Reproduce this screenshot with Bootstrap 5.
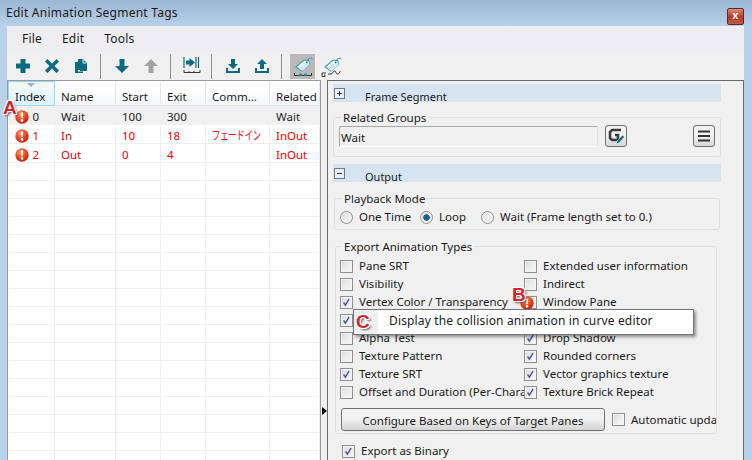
<!DOCTYPE html>
<html lang="en">
  <head>
    <meta charset="UTF-8" />
    <meta name="viewport" content="width=device-width, initial-scale=1.0" />
    <title>Edit Animation Segment Tags</title>
    <link
      rel="stylesheet"
      href="https://cdn.jsdelivr.net/npm/bootstrap@5.3.0/dist/css/bootstrap.min.css"
    />
    <style>
      html, body { height: 460px; overflow: hidden; }
      body {
        font-family: "Noto Sans", "Noto Sans CJK JP", sans-serif;
        font-size: 11.5px;
        line-height: 16px;
        color: #1a1a1a;
        background: #b9d1ea;
      }
      .app-win { height: 460px; position: relative; overflow: hidden; }
      .title-bar {
        height: 27px;
        padding: 5px 8px 0 6px;
        background: linear-gradient(#9bb6d3, #b9d1ea);
        font-size: 12px;
        letter-spacing: .25px;
      }
      .close-x {
        width: 17px; height: 17px; margin-top: 3px;
        border: 1px solid #5c2a25; border-radius: 2px;
        background: linear-gradient(#d98a78, #b23c2c 55%, #c05c48);
        color: #fff; font: bold 11px/13px "Liberation Sans", sans-serif;
        text-align: center;
      }
      .client { margin: 0 8px 0 7px; flex: 1 1 auto; min-height: 0; background: #f0f0f0; }
      .menu-strip { height: 26px; background: #eeeef2; padding-left: 15px; gap: 20px; align-items: center; font-size: 12px; }
      .menu-strip span { letter-spacing: .2px; }
      .tool-strip { height: 29px; padding: 2px 0 0 3px; gap: 4px; }
      .tool-btn { width: 25px; height: 25px; display: flex; align-items: center; justify-content: center; }
      .tool-btn.on { background: #b9b9b9; }
      .tool-sep { width: 1px; height: 25px; margin: 0 4px 0 3px; background: #8c8c8c; }
      .panes { flex: 1 1 auto; min-height: 0; }
      .left-pane { width: 314px; border: 1px solid #9a9a9a; border-bottom: 0; background: #fff; overflow: hidden; flex: none; }
      .split-bar { width: 6px; flex: none; position: relative; }
      .split-bar::after {
        content: ""; position: absolute; left: 1px; top: 327px;
        border-left: 5px solid #000; border-top: 4px solid transparent; border-bottom: 4px solid transparent;
      }
      .right-pane { flex: 1 1 auto; border: 1px solid #696969; border-bottom: 0; padding: 3px 0 0 5px; overflow: hidden; min-width: 0; }

      .seg-table { table-layout: fixed; width: 311px; margin: 0; border-collapse: collapse; }
      .seg-table > thead > tr > th {
        height: 24px; padding: 3px 0 0 6px; font-weight: 400; color: #1a1a1a; white-space: nowrap; overflow: hidden;
        background: linear-gradient(#fff 40%, #f1f5f9);
        border: 0; border-right: 1px solid #e4e8ec; border-bottom: 1px solid #e4e8ec;
        position: relative;
      }
      .seg-table > thead > tr > th.sorted { background: linear-gradient(#f4fbfe, #ddf1fb); border: 1px solid #96d9f9; padding-left: 6px; }
      .sort-mark {
        position: absolute; left: 18px; top: 1px;
        border-top: 4px solid #8fb6d0; border-left: 4px solid transparent; border-right: 4px solid transparent;
      }
      .seg-table > tbody > tr > td {
        height: 18px; padding: 4px 0 0 6px; line-height: 13px; border: 0; border-right: 1px solid #efefef; border-bottom: 1px solid #efefef;
        color: inherit; background: transparent; white-space: nowrap; overflow: hidden; box-shadow: none;
      }
      .seg-table > tbody > tr.picked > td { height: 19px; background: #f0f0f0; border-color: #f0f0f0; }
      .seg-table > tbody > tr.bad { color: #f00000; }
      .err-ico { width: 14px; height: 14px; vertical-align: -3px; margin-right: 4px; margin-top: -3px; }
      .kana-narrow { display: inline-block; transform: scaleX(.68); transform-origin: left; font-size: 12px; }

      .sect-head { height: 18px; background: #d6e4f2; width: 388px; align-items: center; padding: 7px 0 0 1px; font-size: 11px; }
      .sect-box { width: 11px; height: 11px; margin: -6px 20px 0 0; flex: none; }
      .sect-output { margin-top: 7px; }
      fieldset.grp {
        border: 1px solid #dcdfe3; border-radius: 3px; padding: 0 5px; min-width: 0;
      }
      fieldset.grp > legend {
        float: none; width: auto; font-size: 11.5px; line-height: 14px; margin: 0 0 0 2px; padding: 2px 2px 0;
      }
      fieldset.grp-related { margin: 7px 0 0 0; width: 388px; height: 48px; }
      fieldset.grp-play { margin: 8px 0 0 1px; width: 386px; height: 40px; }
      fieldset.grp-export { margin: 8px 0 0 2px; width: 382px; height: 196px; overflow: hidden; padding: 3px 0 0 4px; }
      .group-input {
        width: 259px; height: 21px; margin-top: 1px; padding: 3px 0 0 1px; background: #f0f0f0;
        border: 1px solid #a8a8a8; border-right-color: #e3e3e3; border-bottom-color: #fff; border-radius: 2px 0 0 0;
      }
      .square-btn {
        width: 22px; height: 22px; padding: 0; border: 1px solid #707070; border-radius: 3px;
        background: linear-gradient(#f2f2f2 45%, #d5d5d5); display: flex; align-items: center; justify-content: center;
      }
      .group-edit { margin-left: 7px; }
      .win-check, .win-radio {
        appearance: none; width: 13px; height: 13px; margin: 0 6px 0 0; flex: none;
        border: 1px solid #8e8f8f; background: linear-gradient(135deg, #dcdcdc, #fafafa);
        box-shadow: inset 0 0 0 1px #f4f4f4;
      }
      .win-radio { border-radius: 50%; }
      .win-check:checked {
        background-image: url("data:image/svg+xml,%3Csvg xmlns='http://www.w3.org/2000/svg' viewBox='0 0 13 13'%3E%3Cpath d='M3 6.500l2.200 3L9.500 2.500' fill='none' stroke='%234a5a9c' stroke-width='1.800'/%3E%3C/svg%3E"), linear-gradient(135deg, #dcdcdc, #fafafa);
      }
      .win-radio:checked {
        background-image: radial-gradient(circle, #1a5f9e 0 3px, transparent 3.5px), linear-gradient(135deg, #dcdcdc, #fafafa);
      }
      .opt-line { height: 18px; align-items: center; white-space: nowrap; overflow: hidden; }
      .opt-grid { display: grid; grid-template-columns: 184px 184px; grid-auto-rows: 18px; }
      .radio-line { margin-top: 2px; }
      .label-one { width: 61px; }
      .label-two { width: 42px; }
      .cfg-row { margin-top: 7px; }
      .cfg-btn {
        width: 264px; height: 23px; margin-left: 1px; padding: 2px 0 0; font-size: 11.5px; line-height: 18px; color: #1a1a1a;
        border: 1px solid #707070; border-radius: 3px; background: linear-gradient(#f2f2f2 45%, #d5d5d5); flex: none;
      }
      .auto-line { margin-left: 7px; }
      .binary-line { margin: 8px 0 0 9px; }

      .tip-box {
        position: absolute; left: 353px; top: 309px; width: 341px; height: 26px;
        background: #fff; border: 1px solid #767676; box-shadow: 2px 2px 3px rgba(0,0,0,.4);
        padding: 3px 0 0 35px; font-size: 12px; letter-spacing: .15px; white-space: nowrap;
      }
      .tip-lead { position: absolute; left: 0; top: 0; width: 24px; height: 24px; background: #f0f0f0; }
      .callout {
        position: absolute; font: bold 19px/19px "Liberation Sans", sans-serif; color: #d3232b;
        text-shadow: -1px -1px 0 #fff, 1px -1px 0 #fff, -1px 1px 0 #fff, 1px 1px 0 #fff, 2px 2px 2px #555;
      }
      .mark-a { left: 3px; top: 98px; }
      .mark-b { left: 512px; top: 285px; }
      .mark-c { left: 356px; top: 312px; }
      .err-float { position: absolute; left: 520px; top: 296px; width: 14px; height: 14px; }
    </style>
  </head>

  <body>
    <!-- shared icons -->
    <svg width="0" height="0" class="d-block">
      <defs>
        <radialGradient id="errFill" cx=".4" cy=".3" r=".8">
          <stop offset="0" stop-color="#ff9a70" />
          <stop offset=".55" stop-color="#e8401c" />
          <stop offset="1" stop-color="#a81e10" />
        </radialGradient>
        <symbol id="errIco" viewBox="0 0 14 14">
          <circle cx="7" cy="7" r="6.700" fill="url(#errFill)" />
          <path d="M5.800 2.600h2.400l-.5 5.600H6.300z" fill="#fff" />
          <circle cx="7" cy="10.400" r="1.300" fill="#fff" />
        </symbol>
        <symbol id="tagIco" viewBox="0 0 24 24">
          <path d="M5 13l7.500-6.500 5-.5 1 4-7.500 7z" fill="#fff" stroke="#3a9cb0" stroke-width="1.100" />
          <path d="M7 13.500l4.500 3.500 7-6.500-1-3z" fill="#cfeaf2" />
          <circle cx="15.700" cy="8.300" r=".9" fill="#0e6a80" />
          <path d="M16 7.500c.5-2.500 4-4.500 5.500-2.500" fill="none" stroke="#2a8aa0" stroke-width=".9" />
        </symbol>
      </defs>
    </svg>

    <div class="app-win d-flex flex-column">
      <div class="title-bar d-flex justify-content-between flex-none">
        <span>Edit Animation Segment Tags</span>
        <div class="close-x">x</div>
      </div>

      <div class="client d-flex flex-column">
        <div class="menu-strip d-flex">
          <span>File</span><span>Edit</span><span>Tools</span>
        </div>

        <div class="tool-strip d-flex">
          <div class="tool-btn"><svg width="16" height="16" viewBox="0 0 16 16"><path d="M5.500 1h5v4.500H15v5h-4.500V15h-5v-4.500H1v-5h4.500z" fill="#0e6a80"/></svg></div>
          <div class="tool-btn"><svg width="16" height="16" viewBox="0 0 16 16"><path d="M3.500 1L8 5.500 12.500 1 15 3.500 10.500 8 15 12.500 12.500 15 8 10.500 3.500 15 1 12.500 5.500 8 1 3.500z" fill="#0e6a80"/></svg></div>
          <div class="tool-btn"><svg width="16" height="16" viewBox="0 0 16 16"><path d="M5 1h5l1 1v1h1l2 2v8H7v-1H5z" fill="#0e6a80"/><path d="M2 4h3v9.500h5V15H2z" fill="#0e6a80"/><path d="M10 1.500V5h3.500" fill="none" stroke="#f0f0f0"/></svg></div>
          <div class="tool-sep"></div>
          <div class="tool-btn"><svg width="16" height="16" viewBox="0 0 16 16"><path d="M5.500 1h5v7H15l-7 7-7-7h4.500z" fill="#0e6a80"/></svg></div>
          <div class="tool-btn"><svg width="16" height="16" viewBox="0 0 16 16"><path d="M5.500 15h5V8H15L8 1 1 8h4.500z" fill="#a3a3a3"/></svg></div>
          <div class="tool-sep"></div>
          <div class="tool-btn"><svg width="18" height="20" viewBox="0 0 18 20"><path d="M1 1v11M13 1v11M15.500 1v11" stroke="#0e6a80" stroke-width="1.200" fill="none"/><path d="M3 4.500h3.500V2L12 6.500 6.500 11V8.500H3z" fill="#0e6a80"/><path d="M1 16.500h16M1 14v2.500M6 15v1.500M11 15v1.500M17 14v2.500" stroke="#333" fill="none"/></svg></div>
          <div class="tool-sep"></div>
          <div class="tool-btn"><svg width="16" height="16" viewBox="0 0 16 16"><path d="M6 1h4v5h3l-5 5-5-5h3z" fill="#0e6a80"/><path d="M1 10h2v3h10v-3h2v5H1z" fill="#0e6a80"/></svg></div>
          <div class="tool-btn"><svg width="16" height="16" viewBox="0 0 16 16"><path d="M6 11h4V6h3L8 1 3 6h3z" fill="#0e6a80"/><path d="M1 10h2v3h10v-3h2v5H1z" fill="#0e6a80"/></svg></div>
          <div class="tool-sep"></div>
          <div class="tool-btn on"><svg width="24" height="24" viewBox="0 0 24 24"><use href="#tagIco"/><path d="M3.500 21.500h17M3.500 19v2.500M20.500 19v2.500" stroke="#333" fill="none"/><path d="M8 19.500h3v2H8zM13 19.500h3v2h-3z" fill="#2a9ab5"/></svg></div>
          <div class="tool-btn"><svg width="24" height="24" viewBox="0 0 24 24"><use href="#tagIco"/><path d="M8 20h3c2 0 1.500-3 3.500-3s1 3 3 3 2-2 3-3" fill="none" stroke="#333"/><path d="M6 19H2v3.500h3V21H4" fill="none" stroke="#333"/></svg></div>
        </div>

        <div class="panes d-flex">
          <div class="left-pane">
            <table class="table seg-table">
              <colgroup>
                <col style="width: 46px" /><col style="width: 61px" /><col style="width: 45px" /><col style="width: 45px" /><col style="width: 64px" /><col style="width: 50px" />
              </colgroup>
              <thead>
                <tr>
                  <th class="sorted"><span class="sort-mark"></span>Index</th>
                  <th>Name</th><th>Start</th><th>Exit</th><th>Comm…</th><th>Related</th>
                </tr>
              </thead>
              <tbody id="segRows"></tbody>
            </table>
          </div>
          <div class="split-bar"></div>
          <div class="right-pane">
            <div class="sect-head d-flex">
              <svg class="sect-box" viewBox="0 0 11 11"><rect x=".5" y=".5" width="10" height="10" fill="#e8eff7" stroke="#707880"/><path d="M3 5.500h5M5.500 3v5" stroke="#333"/></svg>
              <span>Frame Segment</span>
            </div>
            <fieldset class="grp grp-related">
              <legend>Related Groups</legend>
              <div class="d-flex align-items-start">
                <div class="group-input">Wait</div>
                <button class="square-btn group-edit" type="button"><svg width="18" height="18" viewBox="0 0 18 18"><path d="M14 3H5L3 5v6l2 2h6V8H8" fill="none" stroke="#3c3c3c" stroke-width="2.600"/><path d="M15.500 8l2 2-5.500 6-3 1 1-3z" fill="#0e6a80" stroke="#fff" stroke-width=".6"/></svg></button>
                <button class="square-btn ms-auto" type="button"><svg width="14" height="14" viewBox="0 0 14 14"><path d="M1 2.500h12M1 7h12M1 11.500h12" stroke="#333" stroke-width="2"/></svg></button>
              </div>
            </fieldset>
            <div class="sect-head sect-output d-flex">
              <svg class="sect-box" viewBox="0 0 11 11"><rect x=".5" y=".5" width="10" height="10" fill="#e8eff7" stroke="#707880"/><path d="M3 5.500h5" stroke="#333"/></svg>
              <span>Output</span>
            </div>
            <fieldset class="grp grp-play">
              <legend>Playback Mode</legend>
              <div class="d-flex radio-line opt-line">
                <input class="win-radio" type="radio" name="playMode" /><span class="label-one">One Time</span>
                <input class="win-radio" type="radio" name="playMode" checked /><span class="label-two">Loop</span>
                <input class="win-radio" type="radio" name="playMode" /><span>Wait (Frame length set to 0.)</span>
              </div>
            </fieldset>
            <fieldset class="grp grp-export">
              <legend>Export Animation Types</legend>
              <div class="opt-grid" id="typeGrid"></div>
              <div class="d-flex align-items-center cfg-row">
                <button class="cfg-btn" type="button">Configure Based on Keys of Target Panes</button>
                <div class="d-flex opt-line auto-line"><input class="win-check" type="checkbox" /><span>Automatic update</span></div>
              </div>
            </fieldset>
            <div class="d-flex opt-line binary-line"><input class="win-check" type="checkbox" checked /><span>Export as Binary</span></div>
          </div>
        </div>
      </div>

      <!-- overlays -->
      <svg class="err-float"><use href="#errIco" /></svg>
      <div class="tip-box"><span class="tip-lead"></span>Display the collision animation in curve editor</div>
      <span class="callout mark-a">A</span>
      <span class="callout mark-b">B</span>
      <span class="callout mark-c">C</span>
    </div>

    <script src="https://cdn.jsdelivr.net/npm/bootstrap@5.3.0/dist/js/bootstrap.bundle.min.js"></script>
    <script>
      // segment rows
      const segments = [
        { index: 0, name: "Wait", start: 100, exit: 300, comment: "", related: "Wait", cls: "picked" },
        { index: 1, name: "In", start: 10, exit: 18, comment: "フェードイン", related: "InOut", cls: "bad" },
        { index: 2, name: "Out", start: 0, exit: 4, comment: "", related: "InOut", cls: "bad" },
      ];
      const errIcon = '<svg class="err-ico"><use href="#errIco" /></svg>';
      let rows = segments.map((s) =>
        `<tr class="${s.cls}"><td>${errIcon}${s.index}</td><td>${s.name}</td><td>${s.start}</td><td>${s.exit}</td><td><span class="kana-narrow">${s.comment}</span></td><td>${s.related}</td></tr>`
      );
      for (let i = 0; i < 17; i++) {
        rows.push("<tr><td></td><td></td><td></td><td></td><td></td><td></td></tr>");
      }
      document.getElementById("segRows").innerHTML = rows.join("");

      // export type check boxes, left column first; row 4 sits under the tooltip
      const types = [
        ["Pane SRT", 0], ["Extended user information", 0],
        ["Visibility", 0], ["Indirect", 0],
        ["Vertex Color / Transparency", 1], ["Window Pane", 0],
        ["", 1], ["", 0],
        ["Alpha Test", 0], ["Drop Shadow", 1],
        ["Texture Pattern", 0], ["Rounded corners", 1],
        ["Texture SRT", 1], ["Vector graphics texture", 1],
        ["Offset and Duration (Per-Character)", 0], ["Texture Brick Repeat", 1],
      ];
      document.getElementById("typeGrid").innerHTML = types
        .map(([label, on]) =>
          `<div class="d-flex opt-line"><input class="win-check" type="checkbox" ${on ? "checked" : ""} /><span>${label}</span></div>`
        )
        .join("");
    </script>
  </body>
</html>
